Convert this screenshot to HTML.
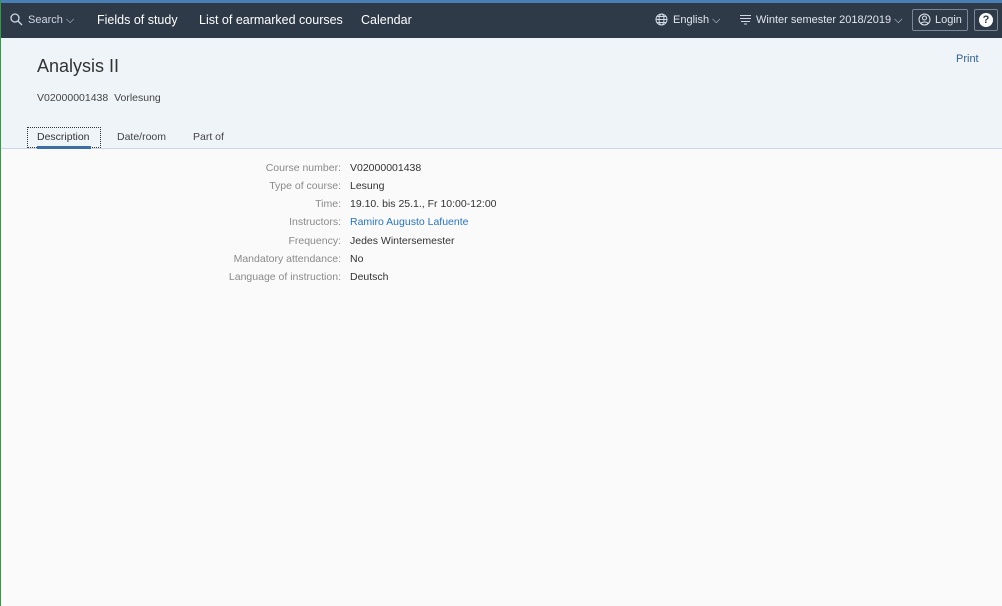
<!DOCTYPE html>
<html><head><style>
*{box-sizing:border-box;margin:0;padding:0}
body{width:1002px;height:606px;overflow:hidden;background:#fafafa;font-family:"Liberation Sans",Arial,sans-serif;position:relative}
.gl{position:absolute;left:0;top:0;width:1px;height:606px;background:#2e9e3e;z-index:5}
.top{position:absolute;left:0;top:0;width:1002px;height:3px;background:#4a7fb5}
.nav{position:absolute;left:0;top:3px;width:1002px;height:35px;background:#2e3a48;color:#fff}
.nav span{position:absolute;top:10px;font-size:12.5px;white-space:nowrap}
.hdr{position:absolute;left:0;top:38px;width:1002px;height:111px;background:#eff4f9;border-bottom:1px solid #c8d8e8}
.lbl{position:absolute;right:661px;font-size:10.5px;color:#8a8a8a;white-space:nowrap}
.val{position:absolute;left:350px;font-size:10.5px;color:#333;white-space:nowrap}
</style></head><body>
<div class="gl"></div>
<div class="top"></div>
<div class="nav">
<svg style="position:absolute;left:10px;top:10px" width="13" height="13" viewBox="0 0 13 13" fill="none" stroke="#cfd8e3" stroke-width="1.3"><circle cx="5" cy="5" r="4"/><path d="M8 8l4 4"/></svg>
<span style="left:28px;top:11px;font-size:11px;color:#cfd8e3">Search ⌵</span>
<span style="left:97px">Fields of study</span>
<span style="left:199px">List of earmarked courses</span>
<span style="left:361px">Calendar</span>
<svg style="position:absolute;left:655px;top:10px" width="13" height="13" viewBox="0 0 13 13" fill="none" stroke="#cfd8e3" stroke-width="1"><circle cx="6.5" cy="6.5" r="5.5"/><ellipse cx="6.5" cy="6.5" rx="2.5" ry="5.5"/><path d="M1 6.5h11M2 3.5h9M2 9.5h9"/></svg>
<span style="left:673px;top:11px;font-size:11px;color:#e0e6ee">English ⌵</span>
<svg style="position:absolute;left:740px;top:11px" width="11" height="11" viewBox="0 0 11 11" fill="none" stroke="#cfd8e3" stroke-width="1"><path d="M0 1.5h11M0 4.5h11M1 7.5h9M4 10h3"/></svg>
<span style="left:756px;top:11px;font-size:11px;color:#e0e6ee">Winter semester 2018/2019 ⌵</span>
<div style="position:absolute;left:912px;top:6px;width:56px;height:22px;border:1px solid #7a8796;border-radius:2px"></div>
<svg style="position:absolute;left:918px;top:10px" width="13" height="13" viewBox="0 0 13 13" fill="none" stroke="#e0e6ee" stroke-width="1"><circle cx="6.5" cy="6.5" r="5.5"/><circle cx="6.5" cy="5" r="2"/><path d="M3 10.5c1-2 6-2 7 0"/></svg>
<span style="left:935px;top:11px;font-size:11px;color:#e0e6ee">Login</span>
<div style="position:absolute;left:974px;top:6px;width:24px;height:22px;border:1px solid #7a8796;border-radius:2px"></div>
<div style="position:absolute;left:979px;top:10px;width:14px;height:14px;border-radius:7px;background:#fff;color:#2e3a48;font-size:11px;font-weight:bold;text-align:center;line-height:14px">?</div>
</div>
<div class="hdr">
<div style="position:absolute;left:37px;top:18px;font-size:18px;color:#333">Analysis II</div>
<div style="position:absolute;left:37px;top:54px;font-size:10.5px;color:#444">V02000001438&nbsp; Vorlesung</div>
<div style="position:absolute;left:956px;top:15px;font-size:11px;color:#34618f">Print</div>
<div style="position:absolute;left:27px;top:89px;width:74px;height:21px;border:1px dotted #333"></div>
<div style="position:absolute;left:37px;top:108px;width:54px;height:3px;background:#3a6ea5"></div>
<div style="position:absolute;left:37px;top:93px;font-size:10.5px;color:#333">Description</div>
<div style="position:absolute;left:117px;top:93px;font-size:10.5px;color:#444">Date/room</div>
<div style="position:absolute;left:193px;top:93px;font-size:10.5px;color:#444">Part of</div>
</div>
<div class="lbl" style="top:162px">Course number:</div><div class="val" style="top:162px">V02000001438</div>
<div class="lbl" style="top:180px">Type of course:</div><div class="val" style="top:180px">Lesung</div>
<div class="lbl" style="top:198px">Time:</div><div class="val" style="top:198px">19.10. bis 25.1., Fr 10:00-12:00</div>
<div class="lbl" style="top:216px">Instructors:</div><div class="val" style="top:216px;color:#2a73b8">Ramiro Augusto Lafuente</div>
<div class="lbl" style="top:235px">Frequency:</div><div class="val" style="top:235px">Jedes Wintersemester</div>
<div class="lbl" style="top:253px">Mandatory attendance:</div><div class="val" style="top:253px">No</div>
<div class="lbl" style="top:271px">Language of instruction:</div><div class="val" style="top:271px">Deutsch</div>
</body></html>
